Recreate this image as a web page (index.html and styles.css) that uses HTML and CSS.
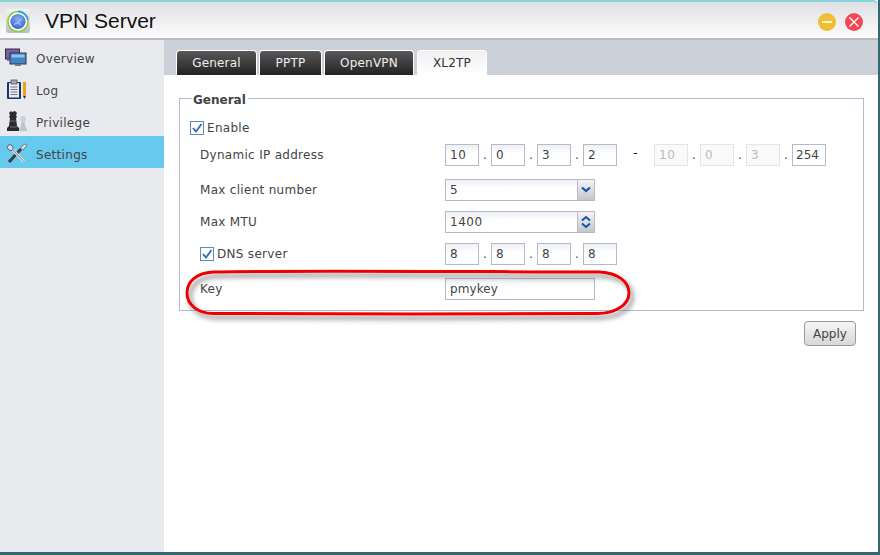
FILE: index.html
```html
<!DOCTYPE html>
<html lang="en">
<head>
<meta charset="utf-8">
<title>VPN Server</title>
<link rel="stylesheet" href="styles.css">
</head>
<body>
<div class="window">
  <header class="titlebar">
    <svg class="logo" width="30" height="30" viewBox="0 0 30 30">
      <defs>
        <linearGradient id="lg" x1="0" y1="0" x2="0" y2="1"><stop offset="0" stop-color="#f4f4f4"/><stop offset="1" stop-color="#b9bcc0"/></linearGradient>
        <radialGradient id="lb" cx=".5" cy=".35" r=".7"><stop offset="0" stop-color="#8fb0f2"/><stop offset="1" stop-color="#2f5fd0"/></radialGradient>
      </defs>
      <rect width="24" height="24" rx="3" fill="url(#lg)"/>
      <circle cx="12" cy="12.500" r="10" fill="#fff" stroke="#8fcf3a" stroke-width="1.600"/>
      <path d="M12 2.500a10 10 0 0 1 9.800 8" fill="none" stroke="#2aa8d8" stroke-width="1.800"/>
      <circle cx="12" cy="12.500" r="7.600" fill="url(#lb)"/>
      <path d="M8 15.500l4-2 4-4M12 13.500l3 3" fill="none" stroke="#dce8ff" stroke-width=".8"/>
    </svg>
    <h1 class="app-title">VPN Server</h1>
    <div class="win-controls">
      <span class="win-btn win-min"><svg width="18" height="18" viewBox="0 0 18 18"><path d="M4 9h10" stroke="#fff" stroke-width="1.600"/></svg></span>
      <span class="win-btn win-close"><svg width="18" height="18" viewBox="0 0 18 18"><path d="M4.500 4.500l9 9M13.500 4.500l-9 9" stroke="#fff" stroke-width="1.200"/></svg></span>
    </div>
  </header>
  <div class="body">
    <nav class="sidebar">
      <a class="nav-item">
        <svg class="nav-icon" width="22" height="20" viewBox="0 0 22 20"><rect x="0.500" y="1" width="14" height="10" fill="#7a5fa8" stroke="#333"/><rect x="5" y="5" width="16" height="11" fill="#3f86c8" stroke="#334"/><rect x="6.500" y="6.500" width="13" height="3" fill="#8fc3ea"/><rect x="10" y="16" width="6" height="2" fill="#777"/><rect x="2" y="11" width="3" height="2" fill="#777"/></svg>
        <span>Overview</span>
      </a>
      <a class="nav-item">
        <svg class="nav-icon" width="22" height="22" viewBox="0 0 22 22"><rect x="2" y="3" width="14" height="17" fill="#16366e" rx="1"/><rect x="4" y="4" width="10" height="14.500" fill="#e8ecef"/><rect x="6" y="1" width="6" height="4" fill="#aab" stroke="#444" stroke-width=".7"/><path d="M5.500 8h7M5.500 10.500h7M5.500 13h7M5.500 15.500h7" stroke="#778" stroke-width="1"/><rect x="18" y="3" width="3" height="14" fill="#eea020"/><path d="M18 17h3l-1.500 3z" fill="#333"/></svg>
        <span>Log</span>
      </a>
      <a class="nav-item">
        <svg class="nav-icon" width="22" height="22" viewBox="0 0 22 22"><path d="M10 0l2 2-1 2 1 2-1 1 1 8 2 2v3H2v-3l2-2 1-8-1-1 1-2-1-2 2-2 1 1z" fill="#2b2b30"/><path d="M5 16h7M5 10h6" stroke="#888" stroke-width=".7"/><circle cx="18" cy="8" r="3" fill="#c9d2dc"/><path d="M16.500 11h3l1 5 1.500 2v2h-8v-2l1.500-2z" fill="#bcc6d2"/></svg>
        <span>Privilege</span>
      </a>
      <a class="nav-item active">
        <svg class="nav-icon" width="22" height="22" viewBox="0 0 22 22"><path d="M4 19L16 6" stroke="#3c3c3c" stroke-width="3"/><path d="M16 7l3-1 3-4-2-1-3 2-1 2z" fill="#dfe5e8" stroke="#444" stroke-width=".6"/><path d="M19 18.500L7 6" stroke="#d8dde0" stroke-width="3"/><path d="M19 18.500L7 6" stroke="#445" stroke-width=".6"/><path d="M3 2.500l2-1 3 2v2l-1 2H5L2 5z" fill="#dde" stroke="#334" stroke-width=".7"/></svg>
        <span>Settings</span>
      </a>
    </nav>
    <main class="content">
      <div class="tabs">
        <a class="tab tab-general">General</a>
        <a class="tab tab-pptp">PPTP</a>
        <a class="tab tab-openvpn">OpenVPN</a>
        <a class="tab tab-xl2tp active">XL2TP</a>
      </div>
      <div class="panel">
        <fieldset class="group">
          <legend class="group-title">General</legend>
          <div class="row row-enable">
            <label class="check-label"><span class="check"><svg width="14" height="14" viewBox="0 0 14 14"><path d="M3 7l3 3.500L11.500 3" fill="none" stroke="#2d6db0" stroke-width="1.800"/></svg></span>Enable</label>
          </div>
          <div class="row row-ip">
            <span class="label">Dynamic IP address</span>
            <div class="ip">
              <span class="field octet">10</span><i class="dot">.</i><span class="field octet">0</span><i class="dot">.</i><span class="field octet">3</span><i class="dot">.</i><span class="field octet">2</span>
            </div>
            <span class="dash">-</span>
            <div class="ip">
              <span class="field octet off">10</span><i class="dot">.</i><span class="field octet off">0</span><i class="dot">.</i><span class="field octet off">3</span><i class="dot">.</i><span class="field octet strong">254</span>
            </div>
          </div>
          <div class="row row-client">
            <span class="label">Max client number</span>
            <div class="field combo"><span class="combo-value">5</span>
              <span class="combo-btn"><svg width="12" height="8" viewBox="0 0 12 8"><path d="M2 1.500l4 3.500 4-3.500" fill="none" stroke="#1450b8" stroke-width="2.200"/></svg></span>
            </div>
          </div>
          <div class="row row-mtu">
            <span class="label">Max MTU</span>
            <div class="field combo"><span class="combo-value">1400</span>
              <span class="combo-btn spin">
                <svg width="12" height="7" viewBox="0 0 12 7"><path d="M2 5.500L6 2l4 3.500" fill="none" stroke="#1450b8" stroke-width="2"/></svg>
                <svg width="12" height="7" viewBox="0 0 12 7"><path d="M2 1.500L6 5l4-3.500" fill="none" stroke="#1450b8" stroke-width="2"/></svg>
              </span>
            </div>
          </div>
          <div class="row row-dns">
            <label class="label check-label"><span class="check"><svg width="14" height="14" viewBox="0 0 14 14"><path d="M3 7l3 3.500L11.500 3" fill="none" stroke="#2d6db0" stroke-width="1.800"/></svg></span>DNS server</label>
            <div class="ip">
              <span class="field octet">8</span><i class="dot">.</i><span class="field octet">8</span><i class="dot">.</i><span class="field octet">8</span><i class="dot">.</i><span class="field octet">8</span>
            </div>
          </div>
          <div class="row row-key">
            <span class="label">Key</span>
            <span class="field key">pmykey</span>
          </div>
        </fieldset>
        <div class="actions"><button class="apply" type="button">Apply</button></div>
      </div>
    </main>
  </div>
  <svg class="oval" width="460" height="60" viewBox="0 0 460 60">
    <defs><filter id="sh" x="-5%" y="-30%" width="110%" height="170%"><feDropShadow dx="3" dy="4" stdDeviation="2.500" flood-color="#555" flood-opacity=".75"/></filter></defs>
    <path d="M28 3C110 1 320 3 415 3C432 4 444 12 444 24C444 36 430 44.500 412 44.500C320 45.500 110 44.500 28 44.500C12 44.500 2 35 2 24C2 12 12 4 28 3Z" fill="none" stroke="#ee0000" stroke-width="3" filter="url(#sh)"/>
  </svg>
</div>
</body>
</html>
```
FILE: styles.css
```css
* { box-sizing: border-box; }
html, body { margin: 0; padding: 0; }
body {
  width: 880px;
  height: 555px;
  overflow: hidden;
  background: #35686e;
  font-family: "DejaVu Sans", sans-serif;
  font-size: 12px;
  color: #444;
}
.window {
  position: relative;
  width: 878px;
  height: 552px;
  display: flex;
  flex-direction: column;
  background: #fff;
}
.titlebar {
  flex: none;
  height: 40px;
  display: flex;
  align-items: center;
  padding: 2px 16px 0 6px;
  border-top: 2px solid #86d3da;
  border-bottom: 2px solid #b9bcc2;
  border-top-right-radius: 5px;
  background: linear-gradient(#dfe0e4, #fcfcfc);
}
.logo { flex: none; margin-top: 5px; width: 30px; height: 30px; }
.app-title {
  margin: 0 0 0 9px;
  font: normal 21px "Liberation Sans", sans-serif;
  color: #111;
}
.win-controls { margin-left: auto; display: flex; gap: 9px; margin-right: -1px; margin-top: 1px; }
.win-btn { width: 18px; height: 18px; border-radius: 50%; display: block; }
.win-btn svg { display: block; }
.win-min { background: #efbe35; }
.win-close { background: #ef4b55; }
.body { flex: 1; display: flex; min-height: 0; }
.sidebar { flex: none; width: 164px; background: #e9eaee; }
.nav-item {
  display: flex;
  align-items: center;
  height: 32px;
  padding: 6px 0 0 5px;
  letter-spacing: 0.3px;
  color: #444;
}
.nav-item span { margin-left: 9px; }
.nav-icon { flex: none; width: 22px; margin-top: -2px; }
.nav-item.active { background: #66c9ee; }
.content { flex: 1; min-width: 0; display: flex; flex-direction: column; }
.tabs {
  flex: none;
  height: 35px;
  background: #ccd0d8;
  display: flex;
  align-items: flex-end;
  padding-left: 12px;
}
.tab {
  height: 25px;
  display: flex;
  align-items: center;
  justify-content: center;
  margin-right: 2px;
  border-radius: 4px 4px 0 0;
  background: linear-gradient(#585858, #222);
  border: 1px solid #fff;
  border-bottom: 0;
  color: #eee;
  letter-spacing: 0.2px;
}
.tab-general { width: 81px; }
.tab-pptp { width: 63px; }
.tab-openvpn { width: 90px; margin-right: 3px; }
.tab-xl2tp { width: 70px; margin-right: 0; }
.tab.active { background: linear-gradient(#f0f0f0, #fff); color: #333; }
.panel { flex: 1; padding: 0 15px; }
.group {
  margin: 14px 0 0;
  padding: 0 0 9px 10px;
  width: 685px;
  min-width: 0;
  border: 1px solid #b6b9cb;
  height: 222px;
}
.group-title {
  margin-left: 2px;
  padding: 4px 2px 0 1px;
  font-weight: bold;
  line-height: 14px;
  color: #444;
}
.row { display: flex; align-items: center; }
.row-enable { height: 20px; margin-top: 11px; }
.row-ip { margin-top: 6px; height: 22px; }
.row-client { margin-top: 13px; height: 22px; }
.row-mtu { margin-top: 10px; height: 22px; }
.row-dns { margin-top: 10px; height: 22px; }
.row-key { margin-top: 13px; height: 22px; }
.label { width: 245px; flex: none; margin-left: 10px; letter-spacing: 0.3px; }
.check-label { display: flex; align-items: center; letter-spacing: 0.3px; }
.check {
  width: 14px;
  height: 14px;
  margin-right: 3px;
  background: #fff;
  border: 1px solid #5a8cc0;
  display: block;
  flex: none;
}
.check svg { display: block; margin: -1px; }
.row-dns .label { padding-bottom: 1px; }
.ip { display: flex; align-items: center; }
.field {
  height: 22px;
  border: 1px solid #b6b9cb;
  background: linear-gradient(#eef0f3, #fff 45%);
  display: flex;
  align-items: center;
  color: #444;
  letter-spacing: 0.5px;
}
.octet { width: 34px; padding-left: 4px; }
.off { color: #bbb; border-color: #e4e5ea; background: #fafafa; }
.strong { background: #fff; padding-left: 3px; letter-spacing: 0; }
.dot { width: 12px; text-align: center; font-style: normal; color: #444; }
.dash { width: 37px; text-align: center; color: #111; padding-bottom: 4px; }
.combo { width: 150px; padding-left: 4px; }
.combo-value { flex: 1; }
.combo-btn {
  flex: none;
  width: 17px;
  height: 20px;
  background: linear-gradient(#f4f4f4, #c4c6ca);
  border-left: 1px solid #b6b9cb;
  display: flex;
  flex-direction: column;
  align-items: center;
  justify-content: center;
}
.combo-btn svg { display: block; }
.key { width: 150px; padding-left: 4px; background: linear-gradient(#eef0f3, #fff 40%); letter-spacing: 0.1px; }
.actions { display: flex; justify-content: flex-end; width: 677px; margin-top: 10px; }
.apply {
  width: 52px;
  height: 25px;
  padding: 0;
  border: 1px solid #999;
  border-radius: 4px;
  background: linear-gradient(#f6f6f6, #d8d8d8);
  font: 12px "DejaVu Sans", sans-serif;
  color: #444;
}
.oval { position: absolute; left: 185px; top: 269px; pointer-events: none; overflow: visible; }
```
